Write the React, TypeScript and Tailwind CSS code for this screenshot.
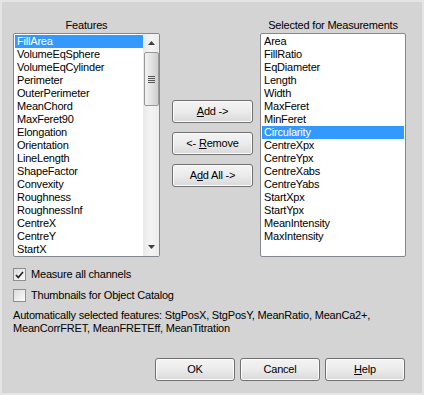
import React from 'react';

const features = [
  'FillArea', 'VolumeEqSphere', 'VolumeEqCylinder', 'Perimeter', 'OuterPerimeter', 'MeanChord',
  'MaxFeret90', 'Elongation', 'Orientation', 'LineLength', 'ShapeFactor', 'Convexity',
  'Roughness', 'RoughnessInf', 'CentreX', 'CentreY', 'StartX',
];

const selected = [
  'Area', 'FillRatio', 'EqDiameter', 'Length', 'Width', 'MaxFeret', 'MinFeret', 'Circularity',
  'CentreXpx', 'CentreYpx', 'CentreXabs', 'CentreYabs', 'StartXpx', 'StartYpx', 'MeanIntensity', 'MaxIntensity',
];

const Row: React.FC<{ label: string; active?: boolean }> = ({ label, active }) => (
  <div className={`h-[13px] leading-[13px] pl-[2px] whitespace-nowrap ${active ? 'bg-[#3399ff] text-white' : 'text-black'}`}>
    {label}
  </div>
);

const Button: React.FC<{ children: React.ReactNode; className?: string }> = ({ children, className }) => (
  <button className={`h-[23px] w-[80px] rounded-[3px] border border-[#707070] bg-gradient-to-b from-[#f4f4f4] via-[#ebebeb] to-[#d9d9d9] text-black shadow-[inset_0_0_0_1px_#fcfcfc] ${className ?? ''}`}>
    {children}
  </button>
);

const Check: React.FC<{ checked?: boolean; label: string }> = ({ checked, label }) => (
  <div className="flex items-center gap-[5px] h-[13px]">
    <div className="w-[13px] h-[13px] border border-[#8e8f8f] bg-gradient-to-br from-[#dcdcdc] to-[#fbfbfb] flex items-center justify-center">
      {checked && (
        <svg width="9" height="8" viewBox="0 0 9 8">
          <path d="M1 4 L3.3 6.5 L8 1" fill="none" stroke="#222" strokeWidth="1.6" />
        </svg>
      )}
    </div>
    <span>{label}</span>
  </div>
);

export default function App() {
  return (
    <div
      className="w-[424px] h-[395px] bg-[#d4d4d4] border-2 border-[#e4e4e4] text-[11px] tracking-[-0.2px] text-black flex flex-col"
      style={{ fontFamily: '"Liberation Sans", Arial, sans-serif' }}
    >
      <div className="flex pl-[11px] pt-[15px]">
        {/* left list */}
        <div className="w-[147px] flex flex-col">
          <div className="h-[16px] text-center">Features</div>
          <div className="h-[224px] border border-[#828790] rounded-[2px] bg-white flex">
            <div className="flex-1 pt-[1px] pl-[1px]">
              {features.map((f, i) => (
                <Row key={f} label={f} active={i === 0} />
              ))}
            </div>
            <div className="w-[16px] bg-gradient-to-r from-[#e9e9e9] via-[#f4f4f4] to-[#ececec] flex flex-col items-center">
              <div className="h-[18px] w-full flex items-center justify-center">
                <svg width="7" height="4" viewBox="0 0 7 4"><path d="M3.5 0 L7 4 L0 4 Z" fill="#404040" /></svg>
              </div>
              <div className="h-[54px] w-[15px] border border-[#989898] rounded-[2px] bg-gradient-to-r from-[#f2f2f2] via-[#e2e2e2] to-[#cfcfcf] flex items-center justify-center">
                <div className="flex flex-col gap-[1px]">
                  <div className="w-[7px] h-[1px] bg-[#555]" />
                  <div className="w-[7px] h-[1px] bg-[#555]" />
                  <div className="w-[7px] h-[1px] bg-[#555]" />
                  <div className="w-[7px] h-[1px] bg-[#555]" />
                </div>
              </div>
              <div className="flex-1" />
              <div className="h-[18px] w-full flex items-center justify-center">
                <svg width="7" height="4" viewBox="0 0 7 4"><path d="M0 0 L7 0 L3.5 4 Z" fill="#404040" /></svg>
              </div>
            </div>
          </div>
        </div>

        {/* middle buttons */}
        <div className="w-[82px] ml-[12px] pt-[83px] flex flex-col gap-[9px]">
          <Button className="w-[81px]"><span className="underline">A</span>dd -&gt;</Button>
          <Button className="w-[81px]">&lt;- <span className="underline">R</span>emove</Button>
          <Button className="w-[81px]">A<span className="underline">d</span>d All -&gt;</Button>
        </div>

        {/* right list */}
        <div className="w-[146px] ml-[6px] flex flex-col">
          <div className="h-[16px] text-center whitespace-nowrap">Selected for Measurements</div>
          <div className="h-[224px] border border-[#828790] rounded-[2px] bg-white pt-[1px] px-[1px]">
            {selected.map((f) => (
              <Row key={f} label={f} active={f === 'Circularity'} />
            ))}
          </div>
        </div>
      </div>

      <div className="pl-[11px] pt-[11px] flex flex-col gap-[8px]">
        <Check checked label="Measure all channels" />
        <Check label="Thumbnails for Object Catalog" />
      </div>

      <div className="pl-[11px] pt-[7px] leading-[13px]">
        Automatically selected features: StgPosX, StgPosY, MeanRatio, MeanCa2+,
        <br />
        MeanCorrFRET, MeanFRETEff, MeanTitration
      </div>

      <div className="flex-1" />
      <div className="flex justify-end gap-[5px] pr-[17px] pb-[12px]">
        <Button>OK</Button>
        <Button>Cancel</Button>
        <Button><span className="underline">H</span>elp</Button>
      </div>
    </div>
  );
}
